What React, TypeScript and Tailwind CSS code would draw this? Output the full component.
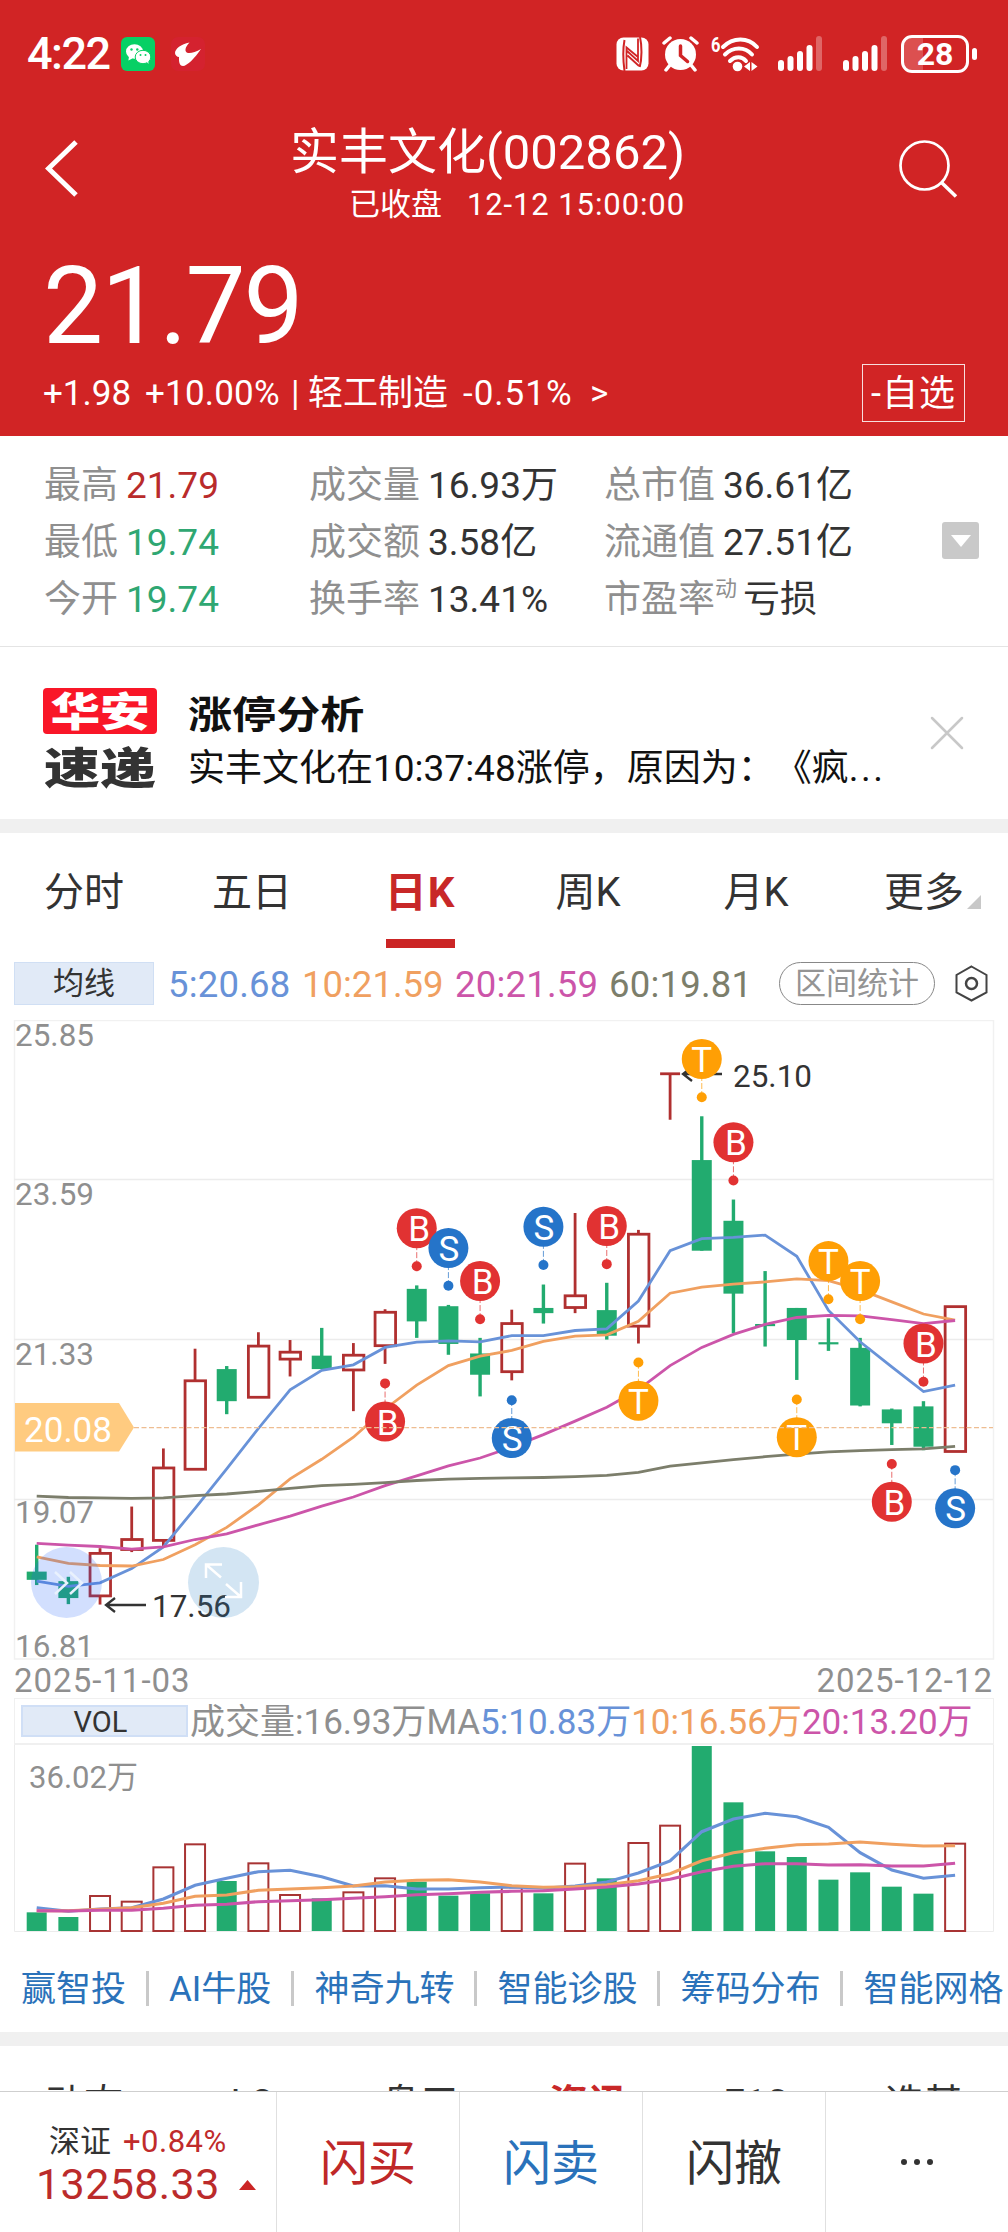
import React from 'react';

type Candle = [high: number, top: number, bottom: number, low: number, up: boolean];

// Price chart is stored on a 1473-unit vertical scale (25.85 at 0, 16.81 at 1473)
const py = (v: number) => v / 2.306;
const vy = (v: number) => v / 3 - 55;
const cx = (i: number) => 36.7 + i * 31.67;

const UP = '#b03030';
const DOWN = '#22ab6f';
const LINE_COLORS = { ma5: '#6892d8', ma10: '#f0a060', ma20: '#cc55a9', ma60: '#7c7e6b' };

const candles: Candle[] = [
  [1210, 1272, 1291, 1303, false],
  [1284, 1294, 1333, 1347, false],
  [1218, 1230, 1328, 1348, true],
  [1122, 1198, 1221, 1227, true],
  [988, 1033, 1200, 1213, true],
  [758, 832, 1036, 1036, true],
  [798, 805, 879, 909, false],
  [720, 752, 870, 870, true],
  [738, 766, 782, 822, true],
  [710, 774, 805, 805, false],
  [745, 773, 807, 902, true],
  [667, 674, 751, 793, true],
  [612, 620, 695, 733, false],
  [657, 660, 747, 772, false],
  [733, 769, 818, 868, false],
  [668, 700, 811, 831, true],
  [610, 664, 676, 700, false],
  [445, 636, 663, 676, true],
  [606, 669, 728, 737, false],
  [484, 494, 706, 746, true],
  [124, 124, 124, 230, true],
  [222, 323, 532, 532, false],
  [414, 463, 631, 722, false],
  [579, 701, 706, 753, false],
  [664, 664, 738, 830, false],
  [688, 743, 748, 763, false],
  [733, 756, 889, 891, false],
  [896, 898, 930, 980, false],
  [879, 891, 984, 992, false],
  [661, 661, 995, 995, true],
];

const priceLines = [
  {
    color: LINE_COLORS.ma5,
    values: [1294, 1306, 1298, 1265, 1215, 1126, 1035, 942, 853, 808, 795, 755, 743, 740, 742, 728, 728, 716, 712, 648, 532, 504, 501, 496, 545, 670, 742, 800, 857, 842],
  },
  {
    color: LINE_COLORS.ma10,
    values: [1238, 1253, 1258, 1259, 1244, 1210, 1170, 1118, 1058, 1013, 962, 897, 842, 797, 775, 762, 741, 729, 726, 695, 630, 616, 609, 604, 597, 601, 622, 650, 678, 692],
  },
  {
    color: LINE_COLORS.ma20,
    values: [1207, 1211, 1214, 1220, 1215, 1198, 1185, 1164, 1144, 1121, 1100, 1074, 1051, 1028, 1010, 985, 956, 925, 893, 852, 797, 755, 725, 702, 686, 681, 682, 691, 700, 693],
  },
  {
    color: LINE_COLORS.ma60,
    values: [1098, 1101, 1102, 1103, 1102, 1097, 1093, 1087, 1080, 1074, 1071, 1067, 1062, 1059, 1057, 1056, 1055, 1053, 1050, 1043, 1029, 1021, 1014, 1007, 1001, 996, 993, 991, 989, 983],
  },
];

const markers: { i: number; y: number; dot: number; type: 'B' | 'S' | 'T' }[] = [
  { i: 11, y: 926, dot: 838, type: 'B' },
  { i: 12, y: 480, dot: 568, type: 'B' },
  { i: 13, y: 526, dot: 613, type: 'S' },
  { i: 14, y: 602, dot: 690, type: 'B' },
  { i: 15, y: 964, dot: 877, type: 'S' },
  { i: 16, y: 477, dot: 565, type: 'S' },
  { i: 18, y: 475, dot: 563, type: 'B' },
  { i: 19, y: 878, dot: 790, type: 'T' },
  { i: 21, y: 90, dot: 178, type: 'T' },
  { i: 22, y: 282, dot: 370, type: 'B' },
  { i: 24, y: 962, dot: 875, type: 'T' },
  { i: 25, y: 556, dot: 644, type: 'T' },
  { i: 26, y: 602, dot: 690, type: 'T' },
  { i: 27, y: 1111, dot: 1024, type: 'B' },
  { i: 28, y: 746, dot: 834, type: 'B' },
  { i: 29, y: 1126, dot: 1038, type: 'S' },
];

const markerColor = { B: '#e13232', S: '#2574c9', T: '#ff9f05' };
const markerShift = { B: 2.5, S: 0.5, T: 0 };

const volumes = [667, 681, 618, 635, 532, 463, 573, 520, 615, 625, 607, 565, 575, 617, 610, 592, 610, 521, 565, 459, 407, 168, 337, 484, 501, 569, 547, 590, 611, 461];

const volumeLines = [
  {
    color: LINE_COLORS.ma5,
    values: [653, 664, 657, 653, 627, 586, 565, 545, 541, 560, 588, 587, 597, 597, 593, 591, 595, 588, 576, 549, 513, 425, 387, 370, 380, 412, 488, 540, 565, 556],
  },
  {
    color: LINE_COLORS.ma10,
    values: [662, 662, 658, 653, 640, 619, 615, 601, 597, 593, 588, 576, 571, 569, 576, 587, 592, 590, 584, 572, 551, 512, 488, 475, 464, 462, 456, 463, 468, 467],
  },
  {
    color: LINE_COLORS.ma20,
    values: [662, 663, 661, 661, 655, 646, 643, 635, 632, 629, 625, 620, 614, 611, 607, 604, 602, 597, 591, 582, 568, 545, 529, 521, 521, 525, 524, 528, 528, 520],
  },
];

const toPoints = (values: number[], scale: (v: number) => number) =>
  values.map((v, i) => `${cx(i).toFixed(1)},${scale(v).toFixed(1)}`).join(' ');

const SignalBars = () => (
  <svg width="45" height="36" viewBox="0 0 45 36" fill="#fff">
    <rect x="0" y="24" width="6" height="11" rx="3" />
    <rect x="9.5" y="20" width="6" height="15" rx="3" />
    <rect x="19" y="15" width="6" height="20" rx="3" />
    <rect x="28.5" y="9" width="6" height="26" rx="3" />
    <rect x="38" y="0" width="6" height="35" rx="3" opacity="0.3" />
  </svg>
);

const StatusBar = () => (
  <div className="flex h-[107px] items-center px-[27px]">
    <span className="w-[94px] text-[45px] font-medium leading-none tracking-[-1.5px]">4:22</span>
    <svg width="34" height="34" viewBox="0 0 34 34" className="shrink-0">
      <rect width="34" height="34" rx="6" fill="#07d065" />
      <ellipse cx="13.5" cy="14.5" rx="8.5" ry="7.3" fill="#fff" />
      <path d="M8 19.5l-.6 4 4-2z" fill="#fff" />
      <ellipse cx="22" cy="20" rx="7.8" ry="6.7" fill="#fff" stroke="#07d065" strokeWidth="1" />
      <path d="M25 24l2.5 3-.3-4z" fill="#fff" />
      <g fill="#07d065">
        <circle cx="10.5" cy="12.5" r="1.2" />
        <circle cx="16.3" cy="12.5" r="1.2" />
        <circle cx="19.5" cy="18" r="1" />
        <circle cx="24.5" cy="18" r="1" />
      </g>
    </svg>
    <svg width="34" height="34" viewBox="0 0 34 34" className="ml-4 shrink-0">
      <rect width="34" height="34" rx="7" fill="#d4222f" />
      <path d="M18.5 5.5C10 7 4 12 4 16c0 2 2 4 4 4-.3 6 1 9 4 9 4 0 12-8 18-17-5 3-10 4.500-13 4C13 15 14 10 18.500 5.500z" fill="#fff" />
    </svg>
    <div className="ml-auto flex items-center">
      <svg width="33" height="34" viewBox="0 0 33 34">
        <rect x="0.500" y="0.500" width="32" height="33" rx="7" fill="#fff" />
        <path d="M8.500 3c-1.500 8-1.500 20 0 31M24 0c2 9 2 22-.3 30" fill="none" stroke="#d12425" strokeWidth="2" />
        <path d="M10.500 32V10.500L22 20M22 1.500V24L11 14M11.500 18.500L23 29" fill="none" stroke="#d12425" strokeWidth="1.8" />
      </svg>
      <svg width="37" height="36" viewBox="0 0 37 36" className="ml-[13px]">
        <circle cx="18.500" cy="18.500" r="15.500" fill="#fff" />
        <g stroke="#fff" strokeWidth="3.500" strokeLinecap="round">
          <path d="M2 7l6-5M35 7l-6-5M8 29l-4 5M29 29l4 5" />
        </g>
        <path d="M18.500 10v9.500l7 6" fill="none" stroke="#d12425" strokeWidth="3.500" strokeLinecap="round" />
      </svg>
      <svg width="49" height="37" viewBox="0 0 49 37" className="ml-3">
        <text x="0" y="17" fill="#fff" fontSize="21" fontWeight="700" textLength="9.500" lengthAdjust="spacingAndGlyphs">6</text>
        <g fill="none" stroke="#fff" strokeWidth="4" strokeLinecap="round">
          <path d="M12 12c10-10 25-10 34 0" />
          <path d="M14 19.500c8-8 20-8 27 0" />
          <path d="M19 26c5-5 12-5 16 0" />
        </g>
        <circle cx="26.500" cy="31.500" r="4.800" fill="#fff" />
        <path d="M33 31.500l6-4.500v9zM46.500 31.500l-6-4.500v9z" fill="#fff" />
      </svg>
      <div className="ml-[18px]">
        <SignalBars />
      </div>
      <div className="ml-5">
        <SignalBars />
      </div>
      <div className="ml-[13px] flex h-[38px] w-[68px] items-center justify-center rounded-[11px] border-[3px] border-white bg-[linear-gradient(90deg,#dc5050_31%,transparent_31%)] text-[32px] font-bold leading-none">
        28
      </div>
      <div className="ml-[3px] mr-[4px] h-[12px] w-[5px] rounded-full bg-white" />
    </div>
  </div>
);

const Header = () => (
  <header className="flex h-[436px] shrink-0 flex-col bg-[#d12425] text-white">
    <StatusBar />
    <div className="flex h-[130px] justify-between pl-[45px] pr-[50px]">
      <svg width="36" height="58" viewBox="0 0 36 58" className="mt-[32px]" fill="none" stroke="#fff" strokeWidth="5">
        <path d="M31 3L3.500 29.500 31 56" />
      </svg>
      <div className="mr-[4px] flex flex-col items-end pt-[20px]">
        <h1 className="whitespace-nowrap text-[49px] leading-[52px]">实丰文化(002862)</h1>
        <p className="mt-[6px] flex gap-[25px] text-[31px] leading-[40px]">
          <span>已收盘</span>
          <span className="tracking-[0.9px]">12-12 15:00:00</span>
        </p>
      </div>
      <svg width="60" height="60" viewBox="0 0 60 60" className="mt-[32px]" fill="none" stroke="#fff" strokeWidth="2.700">
        <circle cx="26.500" cy="26.500" r="24" />
        <path d="M43.500 43.500l14.500 14" strokeWidth="3.500" />
      </svg>
    </div>
    <div className="h-[127px] pl-[43px] pt-[10px] text-[107px] leading-[120px] tracking-[-2px]">
      21.79
    </div>
    <div className="flex h-[58px] items-center justify-between pl-[43px] pr-[43px]">
      <div className="flex items-center whitespace-nowrap text-[35px] leading-none">
        <span className="w-[102px]">+1.98</span>
        <span className="w-[146px] tracking-[0.2px]">+10.00%</span>
        <span className="w-[17px]">|</span>
        <span className="w-[155px]">轻工制造</span>
        <span className="w-[127px] tracking-[1px]">-0.51%</span>
        <span>&gt;</span>
      </div>
      <button className="flex h-[58px] w-[103px] items-center justify-center border border-white/85 pt-[2px] text-[36px] leading-none tracking-[1px]">
        -自选
      </button>
    </div>
  </header>
);

const Stat: React.FC<{ label: string; value: string; color?: string; sup?: string }> = ({ label, value, color = 'text-[#333]', sup }) => (
  <div className="flex h-[57px] items-center whitespace-nowrap">
    <span className="text-[#8f8f8f]">{label}</span>
    {sup && <span className="-mr-[2px] mb-[22px] text-[22px] leading-none text-[#8f8f8f]">{sup}</span>}
    <span className={`ml-2 ${color}`}>{value}</span>
  </div>
);

const Stats = () => (
  <section className="flex h-[211px] shrink-0 items-start border-b border-[#e4e4e4] pl-[44px] pt-[21px] text-[37px] leading-none">
    <div className="w-[265px]">
      <Stat label="最高" value="21.79" color="text-[#b92b2b]" />
      <Stat label="最低" value="19.74" color="text-[#2fa772]" />
      <Stat label="今开" value="19.74" color="text-[#2fa772]" />
    </div>
    <div className="w-[295px]">
      <Stat label="成交量" value="16.93万" />
      <Stat label="成交额" value="3.58亿" />
      <Stat label="换手率" value="13.41%" />
    </div>
    <div className="w-[338px]">
      <Stat label="总市值" value="36.61亿" />
      <Stat label="流通值" value="27.51亿" />
      <Stat label="市盈率" sup="动" value="亏损" />
    </div>
    <div className="mt-[65px] flex h-[37px] w-[37px] items-center justify-center rounded-[3px] bg-[#c9c9c9]">
      <svg width="20" height="12" viewBox="0 0 20 12">
        <path d="M0 0h20L10 12z" fill="#fff" />
      </svg>
    </div>
  </section>
);

const News = () => (
  <section className="flex h-[172px] shrink-0 items-start pl-[43px]">
    <div className="mt-[41px] w-[114px] text-center font-black leading-none">
      <div className="flex h-[46px] items-center justify-center rounded-[4px] bg-[#f91628] pt-[4px] text-white">
        <span className="scale-x-[1.24] whitespace-nowrap text-[40px]">华安</span>
      </div>
      <div className="mt-[13px] flex h-[45px] items-center justify-center text-[#333]">
        <span className="scale-x-[1.3] whitespace-nowrap text-[43px]">速递</span>
      </div>
    </div>
    <div className="ml-[31px] w-[720px] whitespace-nowrap text-[#111]">
      <h2 className="mt-[45px] w-max origin-left scale-x-[1.16] text-[38px] font-bold leading-[46px]">涨停分析</h2>
      <p className="mt-[8px] text-[37px] leading-[46px] [text-spacing-trim:space-all]">
        实丰文化在10:37:48涨停，原因为：《疯<span className="tracking-[2.500px]">...</span>
      </p>
    </div>
    <svg width="34" height="34" viewBox="0 0 34 34" className="ml-[22px] mt-[69px]" stroke="#c8c8c8" strokeWidth="2.500" strokeLinecap="round">
      <path d="M2 2l30 30M32 2L2 32" />
    </svg>
  </section>
);

const Tabs = () => (
  <nav className="grid h-[115px] shrink-0 grid-cols-6 text-[40px] leading-none text-[#333]">
    {['分时', '五日', '日K', '周K', '月K', '更多'].map((tab) => (
      <div key={tab} className="flex flex-col items-center pt-[40px]">
        {tab === '日K' ? (
          <>
            <span className="text-[42px] font-bold leading-[40px] tracking-[1px] text-[#c82828]">{tab}</span>
            <span className="mt-[26px] h-[9px] w-[69px] bg-[#cb2525]" />
          </>
        ) : tab === '更多' ? (
          <span className="flex items-end pl-[17px]">
            {tab}
            <svg width="14" height="14" viewBox="0 0 14 14" className="mb-[4px] ml-[3px]">
              <path d="M14 0v14H0z" fill="#c8c8c8" />
            </svg>
          </span>
        ) : (
          <span>{tab}</span>
        )}
      </div>
    ))}
  </nav>
);

const Averages = () => (
  <div className="flex h-[72px] shrink-0 items-start whitespace-nowrap pl-[14px] pt-[14px] text-[36.5px] leading-[45px]">
    <span className="h-[43px] w-[140px] border border-[#d0dff4] bg-[#e1eaf7] text-center text-[31px] leading-[42px] text-[#333]">均线</span>
    <span className="ml-[14px] w-[134px] tracking-[0.200px] text-[#6892d8]">5:20.68</span>
    <span className="w-[153px] text-[#f0a060]">10:21.59</span>
    <span className="w-[154px] tracking-[0.200px] text-[#cc55a9]">20:21.59</span>
    <span className="w-[170px] tracking-[0.200px] text-[#7c7e6b]">60:19.81</span>
    <span className="h-[43px] w-[156px] rounded-full border border-[#888] text-center text-[31px] leading-[42px] text-[#949494]">区间统计</span>
    <svg width="33" height="37" viewBox="0 0 33 37" className="ml-[20px] mt-[3px]" fill="none" stroke="#444" strokeWidth="2">
      <path d="M16.500 1.500L31.500 10v17.500L16.500 35.500 1.500 27.500V10z" />
      <circle cx="16.500" cy="18.500" r="5.500" strokeWidth="2.500" />
    </svg>
  </div>
);

const PriceChart = () => (
  <svg width="1008" height="640" viewBox="0 0 1008 640" className="block shrink-0">
    <g stroke="#ececec" strokeWidth="1.500">
      <path d="M14.500 0.500H993.500V639H14.500z" fill="none" stroke="#f1f1f1" />
      <path d="M14 159.500H993M14 319.500H993M14 479.500H993" />
    </g>
    <g fill="#8f8f8f" fontSize="32">
      {[['25.85', 60], ['23.59', 427], ['21.33', 795], ['19.07', 1161], ['16.81', 1470]].map(([label, y]) => (
        <text key={label} x="15" y={py(Number(y))} textLength="79" lengthAdjust="spacingAndGlyphs">{label}</text>
      ))}
    </g>

    {candles.map(([high, top, bottom, low, up], i) => {
      const x = cx(i);
      if (!up) {
        return (
          <g key={i} fill={DOWN}>
            <rect x={x - 1.7} y={py(high)} width="3.400" height={py(low - high)} />
            <rect x={x - 10} y={py(top)} width="20" height={py(bottom - top)} />
          </g>
        );
      }
      const h = Math.max(py(bottom - top), 0);
      return (
        <g key={i} stroke={UP} strokeWidth="2.800" fill="none">
          {high < top && <path d={`M${x} ${py(high)}V${py(top)}`} />}
          {low > bottom && <path d={`M${x} ${py(bottom)}V${py(low)}`} />}
          {h > 0 ? <rect x={x - 10} y={py(top)} width="20.500" height={h} /> : <path d={`M${x - 10} ${py(top)}h20`} />}
        </g>
      );
    })}

    {priceLines.map((line) => (
      <polyline key={line.color} points={toPoints(line.values, py)} fill="none" stroke={line.color} strokeWidth="2.800" />
    ))}

    {/* Highest / lowest callouts */}
    <g fill="none" stroke="#333" strokeWidth="2.300">
      <path d="M722 54H683M692 47l-9 7 9 7" />
      <path d="M146 585H106M115 578l-9 7 9 7" />
    </g>
    <g fill="#333" fontSize="32">
      <text x="733" y="66.500" textLength="79" lengthAdjust="spacingAndGlyphs">25.10</text>
      <text x="152" y="597" textLength="79" lengthAdjust="spacingAndGlyphs">17.56</text>
    </g>

    {/* B / S / T trade markers */}
    {markers.map(({ i, y, dot, type }) => (
      <g key={i}>
        <path d={`M${cx(i)} ${py(y)}V${py(dot)}`} stroke={markerColor[type]} strokeDasharray="6 2" opacity="0.700" />
        <circle cx={cx(i)} cy={py(dot)} r="5" fill={markerColor[type]} />
        <circle cx={cx(i)} cy={py(y)} r="20" fill={markerColor[type]} />
        <text x={cx(i) + markerShift[type]} y={py(y) + 13} fill="#fff" fontSize="35" textAnchor="middle">{type}</text>
      </g>
    ))}

    {/* Current price */}
    <path d={`M134 ${py(940)}H993`} stroke="#eebd91" strokeWidth="1.200" strokeDasharray="5 2.500" />
    <path d="M15 383H119L134 407.500 119 431.500H15z" fill="#ffcb80" />
    <text x="24" y="421.500" fill="#fff" fontSize="35" textLength="88" lengthAdjust="spacingAndGlyphs">20.08</text>

    {/* Floating controls */}
    <circle cx="66.500" cy="562.500" r="35.500" fill="rgba(30,95,250,0.200)" />
    <path d="M55 552l12 11-12 11M70 552l12 11-12 11" fill="none" stroke="#e9f1fd" strokeWidth="2.500" />
    <circle cx="223.500" cy="562.500" r="35.500" fill="rgba(37,124,195,0.200)" />
    <path d="M206 558V544.500H222M206 544.500l15 13M226 564l15 13M241 562V577H225" fill="none" stroke="#fff" strokeWidth="2.500" />
  </svg>
);

const VolumeChart = () => (
  <section className="shrink-0">
    <div className="mx-[14px] flex h-[47px] items-center whitespace-nowrap border border-b-2 border-[#f0f0f0] pl-[6px] text-[35px] leading-none text-[#8f8f8f]">
      <span className="mr-[2px] h-[32px] w-[167px] shrink-0 border-2 border-[#d0dff6] bg-[#e1eaf7] pr-[8px] text-center text-[29px] leading-[31px] text-[#333]">VOL</span>
      <div className="pt-[3px]">
        <span>成交量:16.93万MA</span>
        <span className="text-[#6892d8]">5:10.83万</span>
        <span className="text-[#f0a060]">10:16.56万</span>
        <span className="text-[#cc55a9]">20:13.20万</span>
      </div>
    </div>
    <svg width="1008" height="187" viewBox="0 0 1008 187" className="block">
      <path d="M14.500 0V186.500H993.500V0" fill="none" stroke="#ececec" />
      <text x="29" y="43" fill="#8f8f8f" fontSize="32" textLength="109" lengthAdjust="spacingAndGlyphs">36.02万</text>
      {volumes.map((v, i) =>
        candles[i][4] ? (
          <rect key={i} x={cx(i) - 10} y={vy(v)} width="20" height={186 - vy(v)} fill="none" stroke="#a83434" strokeWidth="2" />
        ) : (
          <rect key={i} x={cx(i) - 10} y={vy(v)} width="20" height={186 - vy(v)} fill={DOWN} />
        )
      )}
      {volumeLines.map((line) => (
        <polyline key={line.color} points={toPoints(line.values, vy)} fill="none" stroke={line.color} strokeWidth="3.100" />
      ))}
    </svg>
  </section>
);

const Tools = () => (
  <div className="flex h-[100px] shrink-0 items-center gap-[20px] whitespace-nowrap pb-[4px] pl-[21px] pt-[16px] text-[35px] leading-none text-[#2a72ba]">
    {['赢智投', 'AI牛股', '神奇九转', '智能诊股', '筹码分布', '智能网格'].map((tool, i) => (
      <React.Fragment key={tool}>
        {i > 0 && <span className="h-[35px] w-[3px] shrink-0 bg-[#c9c9c9]" />}
        <span className="pt-[3px]">{tool}</span>
      </React.Fragment>
    ))}
  </div>
);

const TradeBar = () => (
  <footer className="flex h-[141px] shrink-0 border-t border-[#cfcfcf] bg-white text-[48px] leading-none text-[#333]">
    <div className="flex w-[277px] flex-col border-r border-[#e0e0e0] pl-[36px] pt-[34px]">
      <div className="flex items-center pl-[13px] text-[31px]">
        <span>深证</span>
        <span className="ml-[12px] tracking-[0.500px] text-[#c02b2b]">+0.84%</span>
      </div>
      <div className="mt-[6px] flex items-center text-[43px] text-[#bb2b2b]">
        <span className="w-[203px] tracking-[0.400px]">13258.33</span>
        <svg width="17" height="10" viewBox="0 0 17 10">
          <path d="M8.500 0L17 10H0z" fill="#cb2525" />
        </svg>
      </div>
    </div>
    <div className="flex w-[183px] items-center justify-center border-r border-[#e0e0e0] pt-[4px] text-[#bf2828]">闪买</div>
    <div className="flex w-[183px] items-center justify-center border-r border-[#e0e0e0] pt-[4px] text-[#2a72ba]">闪卖</div>
    <div className="flex w-[183px] items-center justify-center border-r border-[#e0e0e0] pt-[4px]">闪撤</div>
    <div className="flex flex-1 items-center justify-center gap-[7px]">
      <span className="h-[6px] w-[6px] rounded-full bg-[#333]" />
      <span className="h-[6px] w-[6px] rounded-full bg-[#333]" />
      <span className="h-[6px] w-[6px] rounded-full bg-[#333]" />
    </div>
  </footer>
);

const App: React.FC = () => {
  return (
    <div className="flex h-[2232px] w-[1008px] flex-col overflow-hidden bg-white font-[Roboto,'Noto_Sans_CJK_SC',sans-serif]">
      <Header />
      <Stats />
      <News />
      <div className="h-[14px] shrink-0 bg-[#f0f0f0]" />
      <Tabs />
      <Averages />
      <PriceChart />
      <div className="flex h-[38px] shrink-0 items-center justify-between pl-[14px] pr-[15px] pt-[2px] text-[33px] leading-none tracking-[1px] text-[#8f8f8f]">
        <span>2025-11-03</span>
        <span>2025-12-12</span>
      </div>
      <VolumeChart />
      <Tools />
      <div className="h-[14px] shrink-0 bg-[#f0f0f0]" />
      <div className="h-[45px] shrink-0 overflow-hidden">
        <div className="grid h-[116px] grid-cols-6 items-center text-center text-[39px] leading-none text-[#333]">
          <span>动态</span>
          <span>L2</span>
          <span>盘口</span>
          <span className="font-bold text-[#c82828]">资讯</span>
          <span>F10</span>
          <span>选基</span>
        </div>
      </div>
      <TradeBar />
    </div>
  );
};

export default App;
